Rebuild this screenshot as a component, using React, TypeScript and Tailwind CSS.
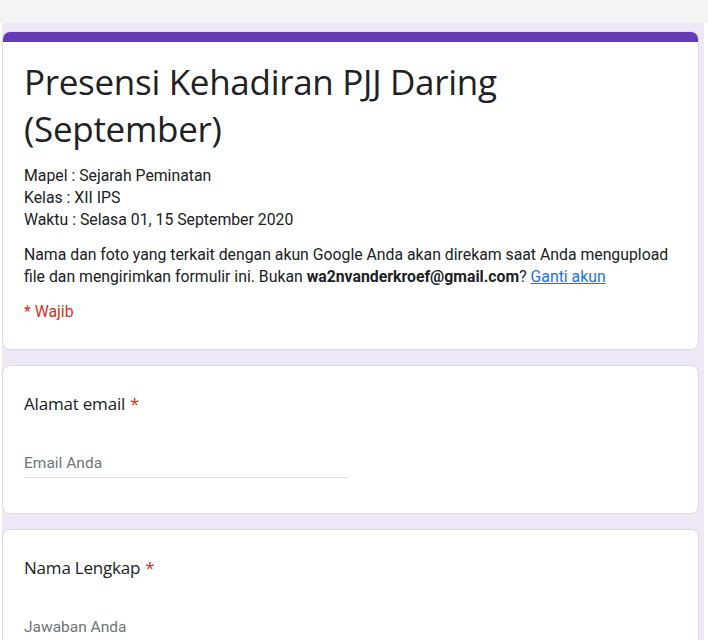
import React from 'react';

const titleFont = "font-['Open_Sans',Roboto,sans-serif]";
const bodyFont = "font-['Roboto','Liberation_Sans',sans-serif]";

const Required = () => <span className="text-[#d93025] ml-[5px]">*</span>;

const QuestionCard = ({ label, placeholder }: { label: string; placeholder: string }) => (
  <div className="shrink-0 bg-white rounded-lg border border-[#dadce0] px-[21px] pt-[26px] pb-[35px]">
    <div className={`${titleFont} text-[17px] leading-6 text-[#202124] tracking-[-0.2px]`}>
      {label}
      <Required />
    </div>
    <div className="mt-[37px] w-[324px] border-b border-[#e0e0e0] pb-[4px]">
      <div className={`${bodyFont} text-[15.5px] leading-5 text-[#70757a]`}>{placeholder}</div>
    </div>
  </div>
);

export default function App() {
  return (
    <div className="w-[708px] h-[640px] overflow-hidden bg-[#f4f4f4] flex flex-col">
      <div className="h-[23px] shrink-0" />
      <div className="flex-1 bg-white pl-[2px] pr-[4px] min-h-0">
        <div className="bg-[#ede7f6] h-full pr-[5px] pt-[8px] flex flex-col gap-[15px]">
          <div className="shrink-0 bg-white rounded-lg border border-[#dadce0] overflow-hidden">
            <div className="h-[11px] bg-[#673ab7] -mx-px -mt-px" />
            <div className="px-[21px] pt-[16px] pb-[26px]">
              <h1 className={`${titleFont} text-[35px] leading-[47px] text-[#202124] tracking-[-0.3px]`}>
                Presensi Kehadiran PJJ Daring (September)
              </h1>
              <div className={`${bodyFont} text-[15.8px] leading-[22px] text-[#202124] mt-[13px]`}>
                <p>Mapel : Sejarah Peminatan</p>
                <p>Kelas : XII IPS</p>
                <p>Waktu : Selasa 01, 15 September 2020</p>
                <p className="mt-[13px]">
                  Nama dan foto yang terkait dengan akun Google Anda akan direkam saat Anda mengupload file dan
                  mengirimkan formulir ini. Bukan <span className="font-bold">wa2nvanderkroef@gmail.com</span>?{' '}
                  <a className="text-[#1a73e8] underline">Ganti akun</a>
                </p>
                <p className="text-[#d93025] mt-[13px]">* Wajib</p>
              </div>
            </div>
          </div>
          <QuestionCard label="Alamat email" placeholder="Email Anda" />
          <QuestionCard label="Nama Lengkap" placeholder="Jawaban Anda" />
        </div>
      </div>
    </div>
  );
}
